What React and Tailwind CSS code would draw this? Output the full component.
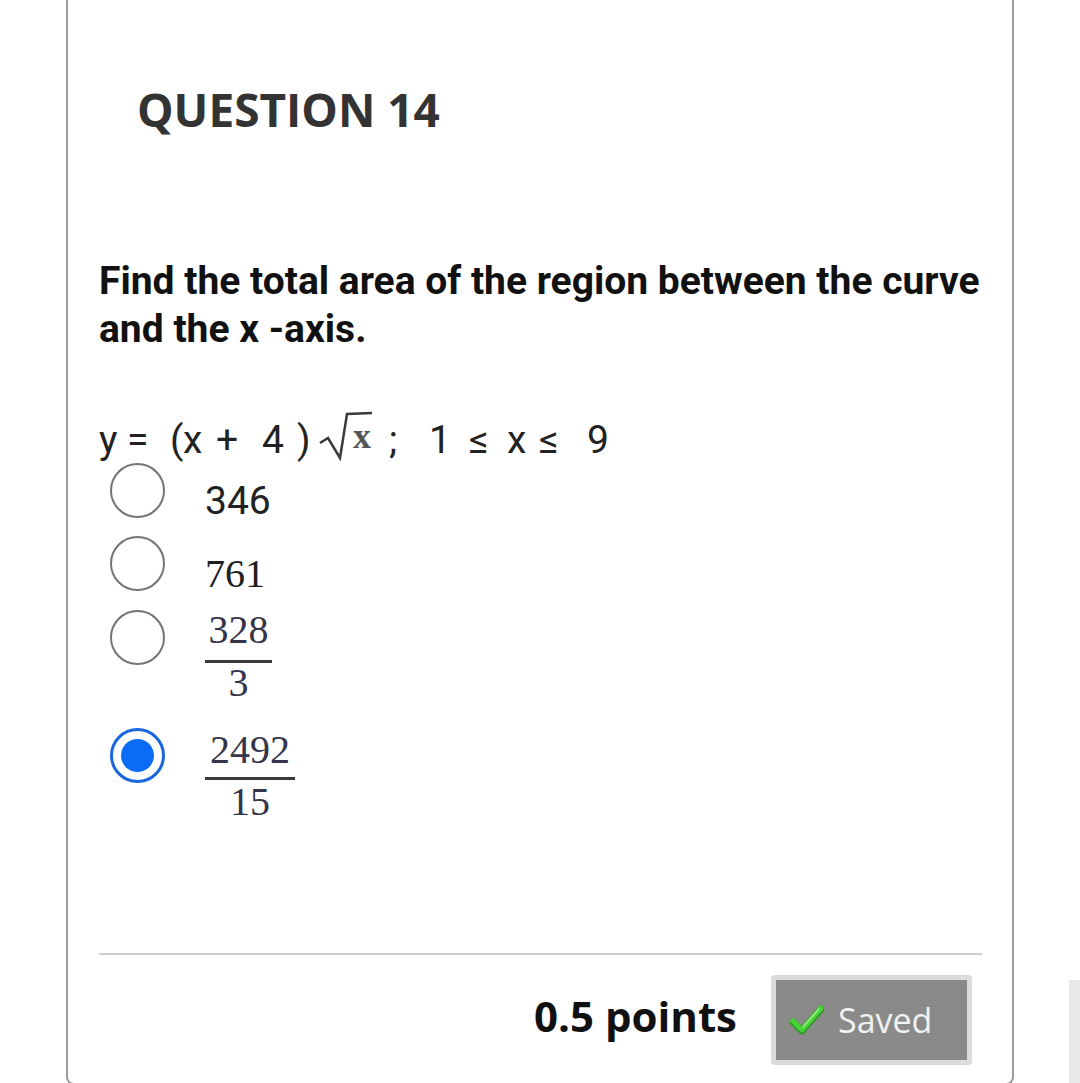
import React from "react";

const roboto = { fontFamily: "Roboto, 'Liberation Sans', sans-serif" };

function Radio({ selected }) {
  if (selected) {
    return (
      <div className="w-[55px] h-[55px] shrink-0 rounded-full border-[3px] border-[#1a66de] bg-white flex items-center justify-center">
        <div className="w-[33px] h-[33px] rounded-full bg-[#0a6cf6]" />
      </div>
    );
  }
  return <div className="w-[55px] h-[55px] shrink-0 rounded-full border-[2.5px] border-[#747474] bg-white" />;
}

function Fraction({ num, den, width, topMt, barMt, denMt }) {
  return (
    <div className={`flex flex-col items-center font-['Liberation_Serif',serif] text-[40px] leading-none text-[#34344a] ${width} ${topMt}`}>
      <div>{num}</div>
      <div className={`w-full h-[3px] bg-[#3a3a3a] ${barMt}`} />
      <div className={denMt}>{den}</div>
    </div>
  );
}

export default function App() {
  return (
    <div className="w-[1080px] h-[1083px] overflow-hidden bg-white flex">
      <div className="ml-[66px] w-[948px] h-[1085px] shrink-0 border-l-2 border-r-2 border-b-2 border-[#9b9b9b] rounded-b-[8px] pl-[31px] pr-[30px] flex flex-col">
        <div className="ml-[38px] mt-[86px] font-['Open_Sans',sans-serif] font-bold text-[46px] leading-none text-[#333333]">
          QUESTION 14
        </div>

        <div
          className="mt-[125px] font-bold text-[39px] leading-[48px] text-[#111111] whitespace-nowrap"
          style={roboto}
        >
          Find the total area of the region between the curve
          <br />
          and the x -axis.
        </div>

        <div className="mt-[68px] h-[39px] flex items-start text-[39px] leading-none text-[#222222]" style={roboto}>
          <span className="w-[28px] shrink-0">y</span>
          <span className="w-[43px] shrink-0">=</span>
          <span className="w-[13px] shrink-0">(</span>
          <span className="w-[33px] shrink-0">x</span>
          <span className="w-[46px] shrink-0">+</span>
          <span className="w-[35px] shrink-0">4</span>
          <span className="w-[21px] shrink-0">)</span>
          <svg width="56" height="50" viewBox="0 0 56 50" className="shrink-0 -mt-[10px]">
            <path d="M2 32 L10 27 L22 47 L29 3 L54 2" fill="none" stroke="#3a3a3a" strokeWidth="2.5" strokeLinejoin="miter" />
          </svg>
          <span className="-ml-[21px] w-[36px] shrink-0 -mt-[3px] font-['Liberation_Serif',serif] font-bold text-[36px] text-[#555555]">
            x
          </span>
          <span className="w-[40px] shrink-0">;</span>
          <span className="w-[40px] shrink-0">1</span>
          <span className="w-[38px] shrink-0">≤</span>
          <span className="w-[32px] shrink-0">x</span>
          <span className="w-[48px] shrink-0">≤</span>
          <span className="shrink-0">9</span>
        </div>

        <div className="flex flex-col pl-[11px]">
          <div className="mt-[3px] flex items-start">
            <Radio />
            <div className="ml-[40px] mt-[19px] text-[39px] leading-none text-[#222222]" style={roboto}>
              346
            </div>
          </div>
          <div className="mt-[15px] flex items-start">
            <Radio />
            <div className="ml-[40px] mt-[18px] font-['Liberation_Serif',serif] text-[40px] leading-none text-[#1e1e1e]">
              761
            </div>
          </div>
          <div className="mt-[16px] flex items-start">
            <Radio />
            <div className="ml-[40px]">
              <Fraction num="328" den="3" width="w-[67px]" topMt="mt-0" barMt="mt-[10px]" denMt="mt-0" />
            </div>
          </div>
          <div className="mt-[25px] flex items-start">
            <Radio selected />
            <div className="ml-[40px]">
              <Fraction num="2492" den="15" width="w-[90px]" topMt="mt-[2px]" barMt="mt-[7px]" denMt="mt-[2px]" />
            </div>
          </div>
        </div>

        <div className="mt-[131px] h-[2px] bg-[#cfcfcf]" />

        <div className="mt-[20px] flex items-center justify-end pr-[10px]">
          <div className="-mt-[8px] font-['Open_Sans',sans-serif] font-bold text-[42px] leading-none text-[#111111]">
            0.5 points
          </div>
          <div className="ml-[34px] w-[201px] h-[90px] rounded-[4px] border-[5px] border-[#dcdcdc] bg-[#8a8a8a] flex items-center pl-[14px]">
            <svg width="34" height="30" viewBox="0 0 34 30" className="shrink-0">
              <path d="M3 17 L12 26 L31 4" fill="none" stroke="#2c9a22" strokeWidth="7" strokeLinecap="round" strokeLinejoin="round" />
              <path d="M3 16 L12 25 L31 3" fill="none" stroke="#49d13a" strokeWidth="5" strokeLinecap="round" strokeLinejoin="round" />
              <path d="M13 22 L29 4" fill="none" stroke="#9cf08a" strokeWidth="1.5" strokeLinecap="round" />
            </svg>
            <span className="ml-[14px] font-['Open_Sans',sans-serif] text-[34px] leading-none text-[#f2f2f2]">Saved</span>
          </div>
        </div>
      </div>
      <div className="ml-[55px] mt-[980px] flex-1 bg-[#e8e8e8]" />
    </div>
  );
}
